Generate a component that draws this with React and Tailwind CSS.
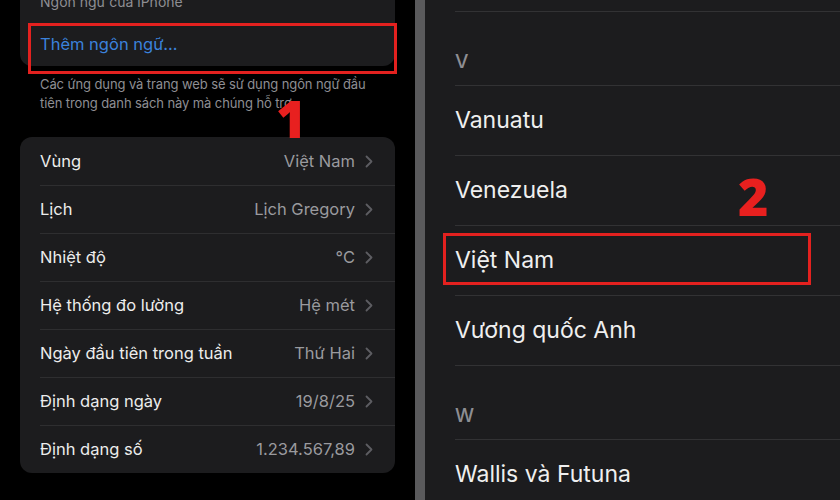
import React from "react";

const F = { fontFamily: "Inter, 'Noto Sans', sans-serif" };

function Chevron() {
  return (
    <svg width="8" height="13" viewBox="0 0 8 13" className="ml-[10px]">
      <path d="M1.5 1.5 L6.5 6.5 L1.5 11.5" fill="none" stroke="#5d5d62" strokeWidth="1.8" strokeLinecap="round" strokeLinejoin="round" />
    </svg>
  );
}

function SettingRow({ label, value, first }) {
  return (
    <div className="h-[48px] flex pl-[20px]">
      <div className={`flex-1 flex items-center pr-[22px] ${first ? "" : "border-t border-[#2e2e30]"}`}>
        <span className="flex-1 text-[16.5px] text-[#ececec]">{label}</span>
        <span className="text-[16.5px] text-[#9a9a9e]">{value}</span>
        <Chevron />
      </div>
    </div>
  );
}

function CountryRow({ name }) {
  return (
    <div className="h-[70px] border-t border-[#323234] flex items-center">
      <span className="text-[23px] text-[#efefef]">{name}</span>
    </div>
  );
}

function Header({ letter }) {
  return (
    <div className="h-[74px] border-t border-[#323234] flex items-end pb-[9px]">
      <span className="text-[19px] text-[#8e8e93] font-medium">{letter}</span>
    </div>
  );
}

export default function App() {
  const rows = [
    ["Vùng", "Việt Nam"],
    ["Lịch", "Lịch Gregory"],
    ["Nhiệt độ", "°C"],
    ["Hệ thống đo lường", "Hệ mét"],
    ["Ngày đầu tiên trong tuần", "Thứ Hai"],
    ["Định dạng ngày", "19/8/25"],
    ["Định dạng số", "1.234.567,89"],
  ];
  return (
    <div className="w-[840px] h-[500px] flex overflow-hidden bg-black" style={F}>
      {/* Left panel */}
      <div className="w-[415px] h-[500px] bg-black relative flex flex-col">
        <div className="ml-[20px] w-[375px] bg-[#1c1c1e] rounded-b-[12px]">
          <div className="h-[22px] pl-[20px] flex items-start overflow-hidden">
            <span className="text-[14px] text-[#8e8e93] mt-[-9px]">Ngôn ngữ của iPhone</span>
          </div>
          <div className="h-[44px] pl-[20px] flex items-center">
            <span className="text-[16.5px] text-[#3b82dc]">Thêm ngôn ngữ...</span>
          </div>
        </div>
        <div className="px-[40px] mt-[9px] text-[13px] leading-[19px] text-[#8e8e93] whitespace-nowrap tracking-[-0.1px]">
          <div>Các ứng dụng và trang web sẽ sử dụng ngôn ngữ đầu</div>
          <div>tiên trong danh sách này mà chúng hỗ trợ</div>
        </div>
        <div className="ml-[20px] mt-[24px] w-[375px] bg-[#1c1c1e] rounded-[12px] overflow-hidden">
          {rows.map(([l, v], i) => (
            <SettingRow key={l} label={l} value={v} first={i === 0} />
          ))}
        </div>
        <div className="absolute left-[28px] top-[23px] w-[369px] h-[51px] border-[3px] border-[#e3211f]" />
        <div className="absolute left-[276px] top-[92px] text-[52px] leading-none font-black text-[#e8201f]" style={{ fontFamily: "'Open Sans', Inter, sans-serif" }}>1</div>
      </div>
      {/* Divider */}
      <div className="w-[10px] h-[500px] bg-[#5a5a5c]" />
      {/* Right panel */}
      <div className="w-[415px] h-[500px] bg-[#1c1c1e] relative pl-[30px]">
        <div className="h-[11px]" />
        <Header letter="V" />
        <CountryRow name="Vanuatu" />
        <CountryRow name="Venezuela" />
        <CountryRow name="Việt Nam" />
        <CountryRow name="Vương quốc Anh" />
        <Header letter="W" />
        <CountryRow name="Wallis và Futuna" />
        <div className="absolute left-[18px] top-[233px] w-[368px] h-[52px] border-[3px] border-[#e3211f]" />
        <div className="absolute left-[313px] top-[170px] text-[52px] leading-none font-black text-[#e8201f]" style={{ fontFamily: "'Open Sans', Inter, sans-serif" }}>2</div>
      </div>
    </div>
  );
}
